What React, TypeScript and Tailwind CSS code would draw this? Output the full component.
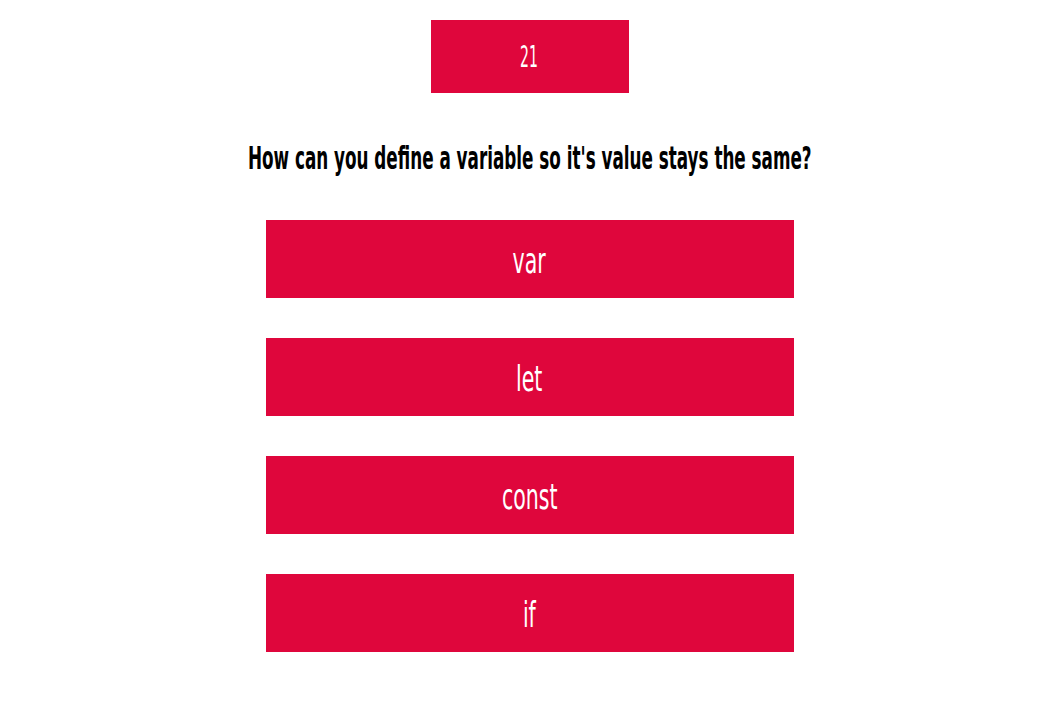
import React from "react";

const answers = ["var", "let", "const", "if"];
const font = { fontFamily: '"DejaVu Sans", "Liberation Sans", sans-serif' };

export default function App() {
  return (
    <div className="min-h-[705px] w-full overflow-hidden bg-white pl-[6px]" style={font}>
      <div className="flex flex-col items-center pt-[20px]">
        <div className="flex h-[73px] w-[198px] items-center justify-center bg-[#df063c] text-[30px] leading-none text-white">
          <span className="inline-block scale-x-[0.47]">21</span>
        </div>
        <h1 className="mt-[47px] whitespace-nowrap text-[32px] font-bold leading-[37px] text-black">
          <span className="inline-block scale-x-[0.525]">
            How can you define a variable so it's value stays the same?
          </span>
        </h1>
        <div className="mt-[43px] flex flex-col gap-[40px]">
          {answers.map((a) => (
            <button
              key={a}
              className="flex h-[78px] w-[528px] items-center justify-center bg-[#df063c] pt-[3px] text-[36px] leading-none text-white"
            >
              <span className="inline-block scale-x-[0.57]">{a}</span>
            </button>
          ))}
        </div>
      </div>
    </div>
  );
}
